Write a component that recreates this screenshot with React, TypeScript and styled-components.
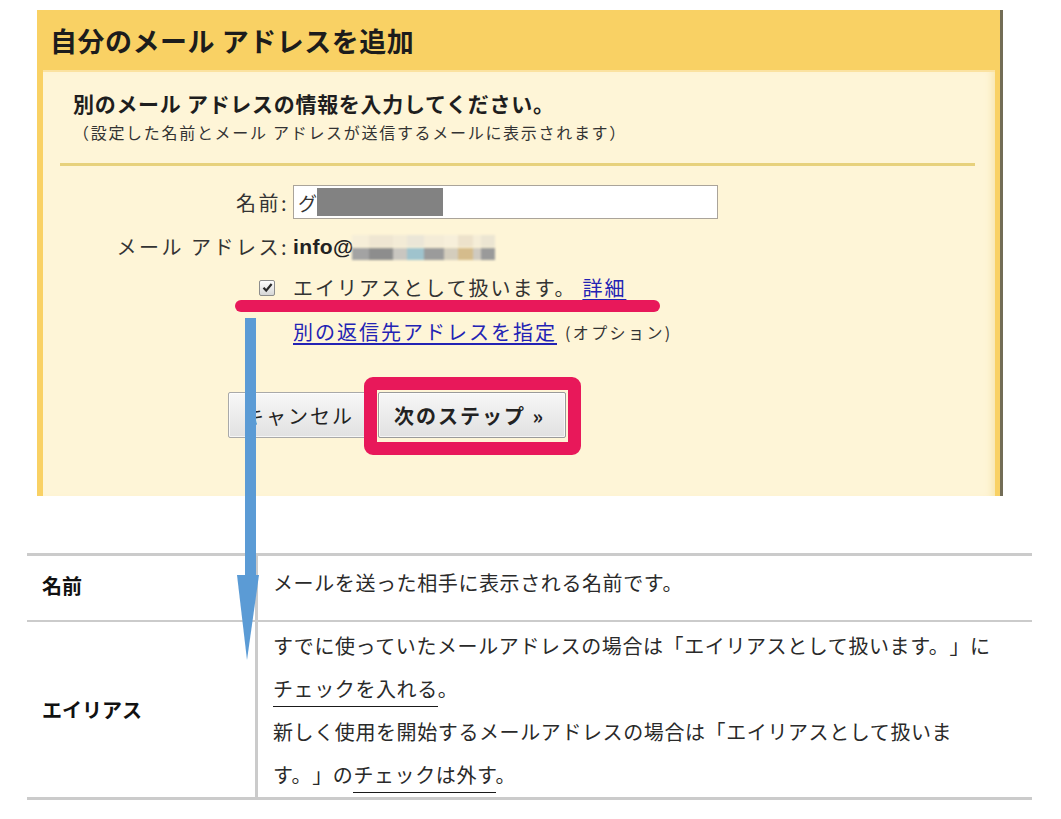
import React from "react";
import styled, { createGlobalStyle } from "styled-components";

const GlobalStyle = createGlobalStyle`
  html, body { margin: 0; padding: 0; background: #ffffff; }
  body {
    font-family: "Noto Sans CJK JP", "Noto Sans", sans-serif;
    color: #222;
  }
  * { box-sizing: border-box; }
`;

const Page = styled.div`
  position: relative;
  width: 1061px;
  height: 819px;
  padding-top: 10px;
  overflow: hidden;
  text-spacing-trim: space-all;
`;

/* ---------- screenshot panel ---------- */

const Shot = styled.section`
  position: relative;
  margin-left: 37px;
  width: 966px;
  height: 486px;
  display: flex;
  flex-direction: column;
  background: #f9d164;
  border-right: 3px solid #736d56;
`;

const ShotHeader = styled.h1`
  margin: 0;
  height: 60px;
  display: flex;
  align-items: center;
  padding-left: 13px;
  font-size: 27px;
  font-weight: 700;
  letter-spacing: 0.5px;
  color: #1c1c1c;
`;

const ShotBody = styled.div`
  flex: 1;
  margin: 0 5px 0 6px;
  border-top: 2px solid #fbe2a0;
  background: #fef5d7;
  box-shadow: inset -8px 0 8px -6px #f6e3a6;
  display: flex;
  flex-direction: column;
`;

const Intro = styled.div`
  padding: 18px 0 0 30px;
`;

const SubHeading = styled.h2`
  margin: 0;
  font-size: 21px;
  line-height: 26px;
  font-weight: 700;
  letter-spacing: 0.7px;
  color: #1e1e1e;
`;

const Caption = styled.p`
  margin: 6px 0 0 0;
  font-size: 16px;
  line-height: 20px;
  letter-spacing: 1.7px;
  color: #333;
`;

const Rule = styled.hr`
  margin: 21px 20px 0 17px;
  height: 3px;
  border: 0;
  background: #e7d17c;
`;

const FieldRow = styled.div<{ $top: number; $h: number }>`
  display: grid;
  grid-template-columns: 246px 1fr;
  column-gap: 4px;
  align-items: center;
  margin-top: ${(p) => p.$top}px;
  height: ${(p) => p.$h}px;
`;

const Label = styled.span`
  justify-self: end;
  font-size: 20px;
  letter-spacing: 2.5px;
  color: #333;
  white-space: nowrap;
`;

const NameInput = styled.div`
  width: 425px;
  height: 34px;
  background: #fff;
  border: 1px solid #aaa49a;
  display: flex;
  align-items: center;
  padding-left: 4px;
  font-size: 19px;
  color: #333;
`;

const Redacted = styled.span`
  display: inline-block;
  width: 126px;
  height: 28px;
  background: #828282;
`;

const Value = styled.span`
  display: flex;
  align-items: center;
`;

const Email = styled.span`
  font-family: "Liberation Sans", "Noto Sans CJK JP", sans-serif;
  font-weight: 700;
  font-size: 21px;
  letter-spacing: 0.4px;
  color: #222;
`;

const Blur = styled.span`
  display: inline-flex;
  flex-direction: column;
  gap: 1px;
  margin-left: -2px;
  margin-top: 2px;
  filter: blur(1.2px);
`;

const BlurLine = styled.span`
  display: flex;
  height: 12px;
`;

const Block = styled.span<{ $w: number; $c: string }>`
  width: ${(p) => p.$w}px;
  height: 100%;
  background: ${(p) => p.$c};
`;

const CheckBox = styled.span`
  justify-self: end;
  margin-right: 14px;
  width: 16px;
  height: 16px;
  border: 1px solid #8c8c8c;
  border-radius: 2px;
  background: linear-gradient(#ffffff, #d6d6d6);
  display: flex;
  align-items: center;
  justify-content: center;
`;

const Plain = styled.span`
  font-size: 20px;
  letter-spacing: 2px;
  color: #333;
  white-space: nowrap;
`;

const Link = styled.a<{ $gap?: number }>`
  margin-left: ${(p) => p.$gap ?? 0}px;
  font-size: 20px;
  letter-spacing: 2px;
  color: #2323b4;
  text-decoration: underline;
  text-underline-offset: 3px;
  white-space: nowrap;
`;

const Note = styled.span`
  margin-left: 8px;
  font-size: 16px;
  letter-spacing: 2.4px;
  color: #333;
  white-space: nowrap;
`;

const ButtonRow = styled.div`
  display: flex;
  gap: 6px;
  margin-top: 49px;
  padding-left: 185px;
`;

const Button = styled.button<{ $primary?: boolean }>`
  height: 46px;
  padding: 0 ${(p) => (p.$primary ? "20px" : "17px")} 0 15px;
  font-family: "Noto Sans CJK JP", sans-serif;
  font-size: 20px;
  font-weight: ${(p) => (p.$primary ? 700 : 400)};
  letter-spacing: 2px;
  color: #222;
  background: linear-gradient(#f7f7f7, #e1e1e1);
  border: 1px solid ${(p) => (p.$primary ? "#9a9a9a" : "#a9a9a9")};
  border-radius: 2px;
  box-shadow: inset 0 0 0 1px rgba(255, 255, 255, 0.7);
  white-space: nowrap;
`;

const NextWrap = styled.span`
  position: relative;
  display: inline-flex;
`;

const Ring = styled.span`
  position: absolute;
  top: -15px;
  left: -14px;
  right: -15px;
  bottom: -17px;
  border: 13px solid #e8185a;
  border-radius: 9px;
  pointer-events: none;
`;

const RedUnderline = styled.span`
  position: absolute;
  left: 198px;
  top: 290px;
  width: 425px;
  height: 12px;
  border-radius: 6px;
  background: #e8185a;
`;

const Arrow = styled.svg`
  position: absolute;
  left: 237px;
  top: 318px;
  z-index: 5;
`;

/* ---------- explanation table ---------- */

const InfoTable = styled.div`
  margin: 57px 0 0 27px;
  width: 1005px;
  border-top: 3px solid #cbcbcb;
  border-bottom: 3px solid #cbcbcb;
`;

const Row = styled.div<{ $divider?: boolean }>`
  display: grid;
  grid-template-columns: 228px 1fr;
  border-top: ${(p) => (p.$divider ? "2px solid #cbcbcb" : "0")};
`;

const HeadCell = styled.div<{ $single?: boolean }>`
  display: flex;
  align-items: center;
  padding-left: 15px;
  padding-bottom: ${(p) => (p.$single ? 6 : 0)}px;
  font-size: 20px;
  font-weight: 700;
  color: #111;
`;

const DescCell = styled.div<{ $single?: boolean }>`
  border-left: 3px solid #cbcbcb;
  padding: ${(p) => (p.$single ? "5px 34px 16px 15px" : "2px 34px 1px 15px")};
  font-size: 20px;
  line-height: 43px;
  letter-spacing: 0.6px;
  color: #2a2a2a;
  text-spacing-trim: space-all;
`;

const Under = styled.span`
  border-bottom: 1px solid #1a1a1a;
  padding-bottom: 3px;
`;

const blurBottom: [number, string][] = [
  [17, "#a3a3a3"],
  [24, "#8d8d8d"],
  [14, "#c9c6c0"],
  [17, "#9fc3cd"],
  [20, "#9b9b9b"],
  [14, "#d4cdbd"],
  [15, "#d5bc8c"],
  [8, "#cfcac0"],
  [14, "#9a9a9a"],
];

const blurTop: [number, string][] = [
  [17, "#f6eed8"],
  [24, "#efe6d2"],
  [14, "#f3ebd6"],
  [17, "#ebe6d7"],
  [20, "#f4ecd7"],
  [14, "#f7efda"],
  [15, "#ede2cb"],
  [8, "#f5edd7"],
  [14, "#ece5d2"],
];

export default function App() {
  return (
    <Page lang="ja">
      <GlobalStyle />
      <Shot>
        <ShotHeader>自分のメール アドレスを追加</ShotHeader>
        <ShotBody>
          <Intro>
            <SubHeading>別のメール アドレスの情報を入力してください。</SubHeading>
            <Caption>（設定した名前とメール アドレスが送信するメールに表示されます）</Caption>
          </Intro>
          <Rule />
          <FieldRow $top={19} $h={34}>
            <Label>名前:</Label>
            <NameInput>
              グ<Redacted />
            </NameInput>
          </FieldRow>
          <FieldRow $top={13} $h={26}>
            <Label>メール アドレス:</Label>
            <Value>
              <Email>info@</Email>
              <Blur>
                <BlurLine>
                  {blurTop.map(([w, c], i) => (
                    <Block key={i} $w={w} $c={c} />
                  ))}
                </BlurLine>
                <BlurLine>
                  {blurBottom.map(([w, c], i) => (
                    <Block key={i} $w={w} $c={c} />
                  ))}
                </BlurLine>
              </Blur>
            </Value>
          </FieldRow>
          <FieldRow $top={15} $h={26}>
            <CheckBox>
              <svg width="11" height="11" viewBox="0 0 11 11">
                <path d="M1.5 5.8 L4.2 8.6 L9.6 2" fill="none" stroke="#2b2b2b" strokeWidth="2.2" />
              </svg>
            </CheckBox>
            <Value>
              <Plain>エイリアスとして扱います。</Plain>
              <Link href="#" $gap={6}>詳細</Link>
            </Value>
          </FieldRow>
          <FieldRow $top={18} $h={26}>
            <span />
            <Value>
              <Link href="#">別の返信先アドレスを指定</Link>
              <Note>(オプション)</Note>
            </Value>
          </FieldRow>
          <ButtonRow>
            <Button>キャンセル</Button>
            <NextWrap>
              <Button $primary>次のステップ »</Button>
              <Ring />
            </NextWrap>
          </ButtonRow>
        </ShotBody>
        <RedUnderline />
      </Shot>

      <InfoTable>
        <Row>
          <HeadCell $single>名前</HeadCell>
          <DescCell $single>メールを送った相手に表示される名前です。</DescCell>
        </Row>
        <Row $divider>
          <HeadCell>エイリアス</HeadCell>
          <DescCell>
            すでに使っていたメールアドレスの場合は「エイリアスとして扱います。」に
            <Under>チェックを入れる</Under>。
            <br />
            新しく使用を開始するメールアドレスの場合は「エイリアスとして扱います。」の
            <Under>チェックは外す</Under>。
          </DescCell>
        </Row>
      </InfoTable>

      <Arrow width="22" height="342" viewBox="0 0 22 342">
        <rect x="8" y="0" width="11" height="258" fill="#5b9bd5" />
        <polygon points="0,257 22,257 10,342" fill="#5b9bd5" />
      </Arrow>
    </Page>
  );
}
